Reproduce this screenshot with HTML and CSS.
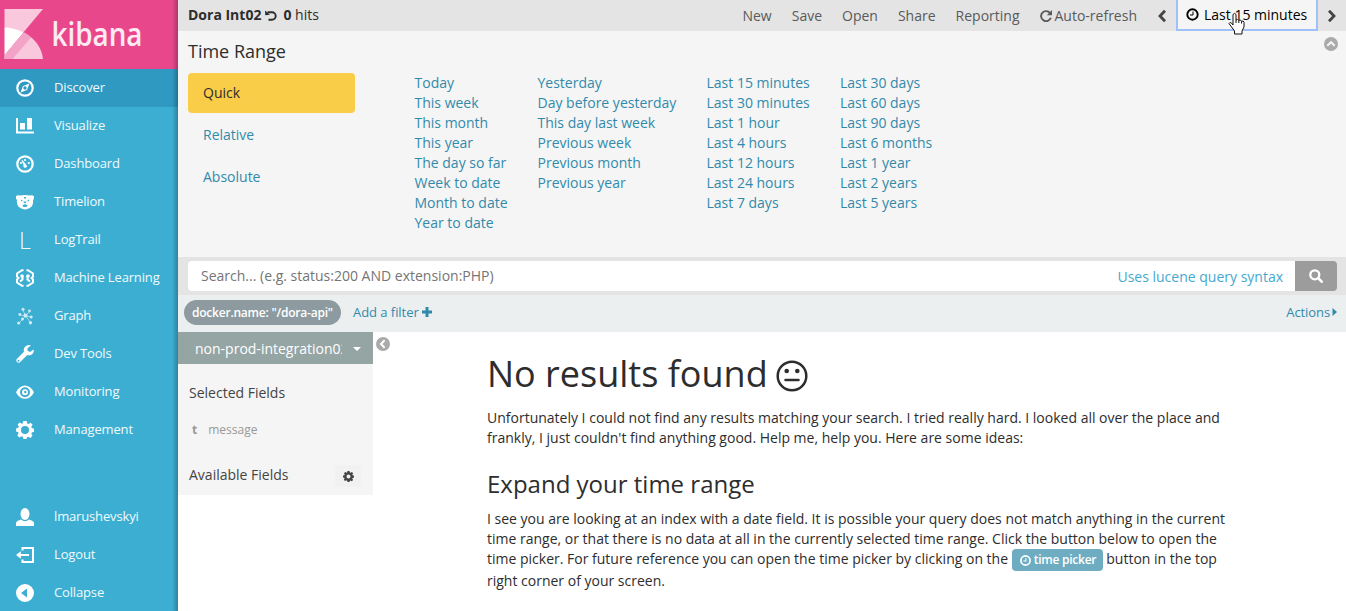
FILE: index.html
```html
<!DOCTYPE html>
<html lang="en">
<head>
<meta charset="utf-8">
<title>Discover - Kibana</title>
<link rel="stylesheet" href="styles.css">
</head>
<body>
<div class="app">
  <nav class="side">
    <svg class="logo" viewBox="0 0 178 69" width="178" height="69">
      <clipPath id="tri"><path d="M4.5 9H43L4.500 55z"/></clipPath>
      <path d="M4.500 9H43L4.500 55z" fill="#f9c8dd"/>
      <path d="M4.500 27.500Q15 27.500 24 33Q41 43 43 59H4.500z" fill="#fff" clip-path="url(#tri)"/>
      <path d="M24 32.500Q41 42 43 59H4.500V55.500z" fill="#f9c8dd"/>
      <path d="M24 32.500Q28 34.800 31 37.500L12.500 59H4.500V55.500z" fill="#f3a3c7"/>
      <text class="wordmark" x="51.500" y="45.500" textLength="91" lengthAdjust="spacingAndGlyphs">kibana</text>
    </svg>
    <a class="item active"><svg viewBox="0 0 18 18"><circle cx="9" cy="9" r="7.700" fill="none" stroke="#fff" stroke-width="2.200"/><path fill-rule="evenodd" d="M13.500 4.500L11 11 4.500 13.500 7 7zM9 7.300a1.700 1.700 0 100 3.400 1.700 1.700 0 000-3.400z"/></svg>Discover</a>
    <a class="item"><svg viewBox="0 0 18 18"><path d="M0 1h2v13.500h16v2H0zM4 6h5v6.500H4zM11 1h5v11.500h-5z"/></svg>Visualize</a>
    <a class="item"><svg viewBox="0 0 18 18"><circle cx="9" cy="9" r="7.700" fill="none" stroke="#fff" stroke-width="2.200"/><circle cx="5" cy="8" r="1.100"/><circle cx="9" cy="5" r="1.100"/><circle cx="12.800" cy="8" r="1.100"/><path d="M5.500 5.500l1-.5 3.500 4.500q1.500 1 .8 2.500-1.400 1.500-3 .3-.9-1.300-.2-2.300z"/></svg>Dashboard</a>
    <a class="item"><svg viewBox="0 0 18 18"><path fill-rule="evenodd" d="M0 3q2-1.300 4-.4 5-1.300 10 0 2-.9 4 .4.500 2.500-1 4 .8 5-3 7.800Q9 18 4 14.800.2 12 1 7-.5 5.500 0 3zM5 6.500v1.700l2-.5zm8 0l-2 1.200 2 .5zM8 4v1.500h2V4zM7.200 8.500L9 10.800l1.800-2.300zM6 13q3-3.300 6 0-1-.4-1.500 1h-3Q7 12.600 6 13z"/></svg>Timelion</a>
    <a class="item"><span class="letter">L</span>LogTrail</a>
    <a class="item"><svg viewBox="0 0 18 18" class="line"><path d="M7.500 1.200H6L1 4.500v3l1.500 1.500L1 10.500v3L6 16.800h1.500M10.500 1.200H12l5 3.300v3L15.500 9l1.500 1.500v3l-5 3.300h-1.500M6.500 7v3.500L4 12.500M11.500 7v3.500l2.500 2"/><circle cx="6" cy="7" r=".8"/><circle cx="12" cy="7" r=".8"/></svg>Machine Learning</a>
    <a class="item"><svg class="faint" viewBox="0 0 18 18"><path d="M7 3l2.500 6L14 4M3 7.500l6.500 1.500 5.500 1M3 16l3.500-3.500L9.500 9l5 6.500" fill="none" stroke="#fff" stroke-width=".7"/><circle cx="7" cy="2.300" r="1.500"/><circle cx="13.500" cy="4" r="1.400"/><circle cx="3.800" cy="7.500" r="1.400"/><circle cx="9.500" cy="8.500" r="2"/><circle cx="15.200" cy="10" r="1.500"/><circle cx="6.500" cy="12" r="1.500"/><circle cx="2.700" cy="16" r="1.600"/><circle cx="14.500" cy="15.700" r="1.700"/></svg>Graph</a>
    <a class="item"><svg viewBox="0 0 18 18"><path fill-rule="evenodd" d="M14.800.4L11.500 3.200v2.600L14 6.900l3.500-2.500c1.200 3.500-2.300 7-6.200 5.600l-7.300 7.200C2 19-1 16 .8 14L8 6.800C6.700 3 10.800-1 14.800.4zM2.500 14.700a1 1 0 100 2 1 1 0 000-2z"/></svg>Dev Tools</a>
    <a class="item"><svg viewBox="0 0 18 18"><path fill-rule="evenodd" d="M0 9.200C4.500.4 13.500.4 18 9.200 13.500 18 4.500 18 0 9.200zm9-5a5 5 0 100 10 5 5 0 000-10z"/><path fill-rule="evenodd" d="M9 6.200a3 3 0 100 6 3 3 0 000-6zm.3 1.500a1.200 1.200 0 110 2.500 1.200 1.200 0 010-2.500z"/></svg>Monitoring</a>
    <a class="item"><svg viewBox="0 0 18 18"><path fill-rule="evenodd" d="M7.300 0h3.400l.6 2.400 1.200.5 2.100-1.200 2 2-1.300 2.200.5 1.200 2.200.6v3l-2.200.8-.5 1.200 1.200 2.100-2.100 2.100-2.200-1.200-1.100.5L10.500 18h-3l-.7-2.200-1.300-.5-2.100 1.200-2.100-2.100 1.300-2.200-.5-1.100L0 10.600V7.500l2.300-.7.500-1.200-1.200-2.100 2-2 2.200 1.300 1-.5zM9 5a4 4 0 100 8 4 4 0 000-8z"/></svg>Management</a>
    <div class="bottom">
      <a class="item"><svg viewBox="0 0 18 18"><ellipse cx="9" cy="6" rx="4.500" ry="6"/><path d="M0 18v-3.500Q1 12.500 5 11.500q4 3.500 8 0 4 1 5 3V18z"/></svg>lmarushevskyi</a>
      <a class="item"><svg viewBox="0 0 18 18"><path d="M6.500 4.500V2H17v14H6.500v-2.500M3 9h10" fill="none" stroke="#fff" stroke-width="2"/><path d="M0 9l4.800-3.700v7.400z"/></svg>Logout</a>
      <a class="item"><svg viewBox="0 0 18 18"><path fill-rule="evenodd" d="M9 0a9 9 0 100 18A9 9 0 009 0zm2 4.500v9L5 9z"/></svg>Collapse</a>
    </div>
  </nav>

  <main class="main">
    <header class="bar">
      <div class="title"><b>Dora Int02</b><svg class="undo" width="12" height="12" viewBox="0 0 12 12"><path d="M2.500 2.300H7a3.700 3.700 0 010 7.400H3.500" fill="none" stroke="#2d2d2d" stroke-width="1.900"/><path d="M0 .5l.3 4.800 4.700-.6z" fill="#2d2d2d"/></svg><b>0</b>&nbsp;hits</div>
      <div class="menu">
        <a>New</a><a>Save</a><a>Open</a><a>Share</a><a>Reporting</a>
        <a class="auto"><svg width="12" height="12" viewBox="0 0 12 12"><path d="M10 3A5 5 0 1010.800 7.800" fill="none" stroke="#5a5a5a" stroke-width="1.900"/><path d="M12 0v5.200H6.800z" fill="#5a5a5a"/></svg>Auto-refresh</a>
      </div>
      <svg class="prev" width="10" height="12" viewBox="0 0 10 12"><path d="M8 .7L3 6l5 5.300" fill="none" stroke="#444" stroke-width="2.800"/></svg>
      <div class="picker"><svg width="13" height="13" viewBox="0 0 13 13"><circle cx="6.500" cy="6.500" r="5.200" fill="none" stroke="#000" stroke-width="1.900"/><path d="M7 3.500V7H4" fill="none" stroke="#000"/></svg>Last 15 minutes
        <svg class="cursor" width="18" height="23" viewBox="0 0 18 23"><path d="M5 13V2.500Q6.500.3 8 2.500V8Q9.500 6.500 10.800 8.500 12.500 7 13.500 9.300q2-1 2.500 1V15L14 19v3H6.500v-3L1 11.500Q2.500 9 5 13z" fill="#fff" stroke="#111"/><path d="M8 8v3M10.800 8.500V11M13.500 9.300V11.500" stroke="#111"/></svg>
      </div>
      <svg class="next" width="10" height="12" viewBox="0 0 10 12"><path d="M2 .7l5 5.300-5 5.300" fill="none" stroke="#444" stroke-width="2.800"/></svg>
    </header>

    <section class="range">
      <div class="range-head"><span>Time Range</span><svg width="14" height="14" viewBox="0 0 14 14"><circle cx="7" cy="7" r="7" fill="#aaa"/><path d="M3.300 8.800L7 5.200l3.700 3.600" fill="none" stroke="#f5f5f5" stroke-width="2"/></svg></div>
      <div class="range-body">
        <div class="modes"><a class="on">Quick</a><a>Relative</a><a>Absolute</a></div>
        <div class="quick">
          <div><a>Today</a><a>This week</a><a>This month</a><a>This year</a><a>The day so far</a><a>Week to date</a><a>Month to date</a><a>Year to date</a></div>
          <div><a>Yesterday</a><a>Day before yesterday</a><a>This day last week</a><a>Previous week</a><a>Previous month</a><a>Previous year</a></div>
          <div><a>Last 15 minutes</a><a>Last 30 minutes</a><a>Last 1 hour</a><a>Last 4 hours</a><a>Last 12 hours</a><a>Last 24 hours</a><a>Last 7 days</a></div>
          <div><a>Last 30 days</a><a>Last 60 days</a><a>Last 90 days</a><a>Last 6 months</a><a>Last 1 year</a><a>Last 2 years</a><a>Last 5 years</a></div>
        </div>
      </div>
    </section>

    <div class="search">
      <div class="field"><span>Search... (e.g. status:200 AND extension:PHP)</span><a>Uses lucene query syntax</a></div>
      <div class="go"><svg width="14" height="14" viewBox="0 0 14 14"><circle cx="5.800" cy="5.800" r="4.500" fill="none" stroke="#fff" stroke-width="2.300"/><path d="M9.200 9.200l3.500 3.500" stroke="#fff" stroke-width="2.600" stroke-linecap="round"/></svg></div>
    </div>

    <div class="filters">
      <span class="pill">docker.name: "/dora-api"</span>
      <a class="add">Add a filter <svg width="10" height="10" viewBox="0 0 10 10"><path d="M5 0v10M0 5h10" stroke="#328aab" stroke-width="3"/></svg></a>
      <a class="actions">Actions<svg width="5" height="8" viewBox="0 0 5 8"><path d="M.5 0L5 4 .5 8z" fill="#328aab"/></svg></a>
    </div>

    <div class="content">
      <aside class="fields">
        <div class="index"><span>non-prod-integration02</span><svg width="8" height="4" viewBox="0 0 8 4"><path d="M0 0h8L4 4z" fill="#fff"/></svg></div>
        <div class="fieldlist">
          <h5>Selected Fields</h5>
          <p><b>t</b>message</p>
          <h5 class="avail">Available Fields<span><svg width="11" height="11" viewBox="0 0 18 18"><path fill="#444" fill-rule="evenodd" d="M7.300 0h3.400l.6 2.400 1.200.5 2.100-1.200 2 2-1.300 2.200.5 1.200 2.200.6v3l-2.200.8-.5 1.200 1.200 2.100-2.100 2.100-2.200-1.200-1.100.5L10.500 18h-3l-.7-2.200-1.300-.5-2.100 1.200-2.100-2.100 1.300-2.200-.5-1.100L0 10.600V7.500l2.300-.7.500-1.200-1.200-2.100 2-2 2.200 1.300 1-.5zM9 5.700a3.300 3.300 0 100 6.600 3.300 3.300 0 000-6.600z"/></svg></span></h5>
        </div>
      </aside>
      <svg class="fold" width="14" height="14" viewBox="0 0 14 14"><circle cx="7" cy="7" r="7" fill="#aaa"/><path d="M8.600 3.300L5 7l3.600 3.700" fill="none" stroke="#fff" stroke-width="2"/></svg>
      <article class="empty">
        <h1>No results found <svg width="32" height="32" viewBox="0 0 32 32"><circle cx="16" cy="16" r="14.300" fill="none" stroke="#2d2d2d" stroke-width="2.500"/><circle cx="10.700" cy="11" r="2.300" fill="#2d2d2d"/><circle cx="21.300" cy="11" r="2.300" fill="#2d2d2d"/><path d="M9.500 20h13" stroke="#2d2d2d" stroke-width="2.500" stroke-linecap="round"/></svg></h1>
        <p>Unfortunately I could not find any results matching your search. I tried really hard. I looked all over the place and<br>frankly, I just couldn't find anything good. Help me, help you. Here are some ideas:</p>
        <h3>Expand your time range</h3>
        <p>I see you are looking at an index with a date field. It is possible your query does not match anything in the current<br>time range, or that there is no data at all in the currently selected time range. Click the button below to open the<br>time picker. For future reference you can open the time picker by clicking on the <span class="btn"><svg width="11" height="11" viewBox="0 0 13 13"><circle cx="6.500" cy="6.500" r="5.400" fill="none" stroke="#fff" stroke-width="2"/><path d="M7 3.500V7H4" fill="none" stroke="#fff" stroke-width="1.200"/></svg>time picker</span> button in the top<br>right corner of your screen.</p>
      </article>
    </div>
  </main>
</div>
</body>
</html>
```
FILE: styles.css
```css
* { box-sizing: border-box; }
body { margin: 0; font: 14px/20px "Open Sans", sans-serif; color: #2d2d2d; background: #fff; overflow: hidden; }
h1, h3, h5, p { margin: 0; font-weight: 400; }
.app { display: flex; height: 611px; white-space: nowrap; }

.side { position: relative; width: 178px; flex: none; display: flex; flex-direction: column; background: #3caed2; }
.side::after { content: ""; position: absolute; inset: 0 0 0 auto; width: 6px; background: linear-gradient(90deg, rgba(0,0,0,0), rgba(0,0,0,.25)); }
.logo { display: block; flex: none; background: #e8488b; }
.wordmark { font: 600 33px "Open Sans", sans-serif; fill: #fdeaf3; }
.item { display: flex; align-items: center; flex: none; height: 38px; padding: 0 0 2px 16px; gap: 20px; color: #f0fafc; font-size: 13px; letter-spacing: -.15px; }
.item svg { width: 18px; height: 18px; flex: none; fill: #fff; margin: 2px 0 0; }
.item .line { fill: none; stroke: #fff; stroke-width: 2; }
.item.active { background: #2f99c1; }
.letter { width: 18px; padding: 2px 0 0 3px; font-size: 23px; line-height: 34px; font-weight: 300; }
.faint { opacity: .75; }
.bottom { margin-top: auto; }
.bottom .item { padding-bottom: 1px; }

.main { flex: 1; min-width: 0; }
.bar { display: flex; align-items: center; height: 31px; padding-bottom: 0; background: #e4e4e4; }
.title { display: flex; align-items: center; flex: 1; padding: 0 0 1px 10px; }
.undo { margin: 1px 6px 0 4px; }
.menu { display: flex; gap: 20px; color: #5a5a5a; }
.auto { display: flex; align-items: center; gap: 3px; }
.prev { margin: 0 9px 0 20px; }
.next { margin: 0 9px; }
.picker { position: relative; display: flex; align-items: center; gap: 5px; width: 142px; height: 31px; padding-left: 8px; border: 1px solid #9fc1fa; border-width: 0 2px 2px; background: #f5f5f5; color: #000; }
.cursor { position: absolute; left: 50px; top: 12px; }

.range { height: 226px; padding: 10px 8px 0 10px; background: #f5f5f5; }
.range-head { display: flex; justify-content: space-between; height: 32px; font-size: 18px; }
.range-head svg { margin-top: -4px; }
.range-body { display: flex; }
.modes { width: 167px; display: flex; flex-direction: column; gap: 2px; }
.modes a { height: 40px; padding: 10px 15px; border-radius: 4px; color: #328aab; }
.modes .on { background: #facd48; color: #2d2d2d; }
.quick { display: grid; grid-template-columns: 123px 169px 133.500px 120px; margin-left: 59.500px; color: #328aab; }
.quick a { display: block; height: 20px; }

.search { display: flex; height: 38px; padding: 4px 9px 4px 10px; background: #e4e4e4; }
.field { flex: 1; display: flex; align-items: center; justify-content: space-between; padding: 0 12px 0 13px; border-radius: 4px 0 0 4px; background: #fff; color: #757575; }
.field a { padding-top: 2px; color: #45a9cf; }
.go { width: 42px; display: flex; align-items: center; justify-content: center; border-radius: 0 4px 4px 0; background: #9c9c9c; }

.filters { display: flex; align-items: center; height: 37px; padding: 0 9px 2px 6px; background: #ebeff0; font-size: 13px; color: #328aab; }
.pill { width: 157px; height: 25px; line-height: 25px; padding-left: 8px; border-radius: 13px; background: #8d9ba1; color: #fff; font-size: 12px; font-weight: 600; letter-spacing: -.22px; }
.add { margin-left: 12px; padding-bottom: 2px; letter-spacing: -.05px; }
.actions { display: flex; align-items: center; gap: 2px; margin-left: auto; padding-bottom: 2px; letter-spacing: -.1px; }

.content { display: flex; align-items: flex-start; }
.fields { width: 195px; flex: none; }
.index { display: flex; align-items: center; justify-content: space-between; height: 32px; padding: 2px 12px 0 17px; background: #95a5a4; color: #fff; }
.index span { width: 147px; overflow: hidden; }
.fieldlist { height: 131px; padding: 19px 11px 0; background: #f5f5f5; color: #444; }
.fieldlist h5 { font-size: 14px; }
.fieldlist p { display: flex; gap: 11px; padding: 17px 0 0 3px; color: #999; font-size: 12px; }
.avail { display: flex; justify-content: space-between; padding-top: 25px; }
.avail span { width: 26px; height: 22px; margin-right: 1px; display: flex; align-items: center; justify-content: center; border-radius: 3px; background: #f1f1f1; }
.fold { margin: 5px 0 0 3px; }
.empty { margin-left: 97px; padding-top: 18px; }
.empty h1 { font-size: 36px; line-height: 48px; height: 58px; }
.empty h1 svg { vertical-align: -5px; margin-left: -1px; }
.empty h3 { font-size: 24px; line-height: 30px; margin: 21px 0 10px; }
.btn { display: inline-flex; align-items: center; gap: 3px; width: 91px; height: 22px; padding-left: 8px; border-radius: 4px; background: #6eadc1; color: #fff; font-size: 12px; font-weight: 600; letter-spacing: -.25px; vertical-align: middle; }
```
